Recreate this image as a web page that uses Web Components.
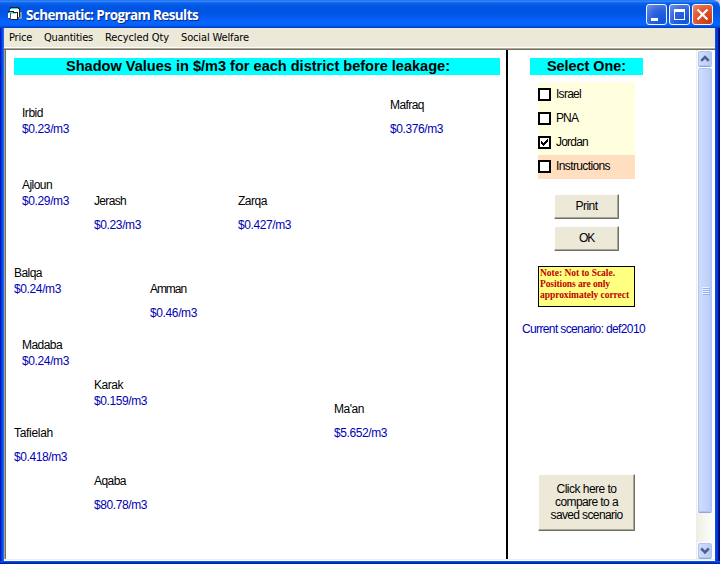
<!DOCTYPE html>
<html lang="en">
<head>
<meta charset="utf-8">
<title>Schematic: Program Results</title>
<style>
html,body{margin:0;width:720px;height:564px;overflow:hidden;background:#c8c8f0;font-family:"Liberation Sans",Arial,sans-serif}
</style>
</head>
<body>
<schematic-window></schematic-window>
<script>
const define = (name, html, after) => customElements.define(name, class extends HTMLElement {
  connectedCallback() {
    if (this.shadowRoot) return;
    this.attachShadow({mode: 'open'}).innerHTML = typeof html === 'function' ? html(this) : html;
    if (after) after(this);
  }
});

// Sets a line of text to an exact width, by tracking or by stretching.
define('fit-text', `<style>
  :host{display:inline-block;white-space:pre;width:var(--w);text-align:left}
  span{display:inline-block;transform-origin:0 50%}
</style><span><slot></slot></span>`, el => {
  const w = +el.getAttribute('w');
  el.style.setProperty('--w', w + 'px');
  const s = el.shadowRoot.querySelector('span');
  const natural = s.getBoundingClientRect().width;
  if (el.hasAttribute('stretch')) s.style.transform = `scaleX(${w / natural})`;
  else s.style.letterSpacing = (w - natural) / el.textContent.length + 'px';
});

define('caption-button', el => {
  const k = el.getAttribute('kind');
  const icon = {
    min: '<path fill="#fff" d="M5 14h7v3H5z"/>',
    max: '<path fill="#fff" fill-rule="evenodd" d="M5 5h11v11H5zM6 8v7h9V8z"/>',
    close: '<path stroke="#fff" stroke-width="2.3" d="M5.5 5.5l10 10M15.5 5.5l-10 10"/>'
  }[k];
  return `<style>
  :host{display:block;box-sizing:border-box;width:21px;height:21px;border:1px solid #f4f6ff;border-radius:3px;
    background:${k === 'close' ? 'radial-gradient(circle at 80% 85%,#c83c12,#e3542e 55%,#ec8a6e)' : 'radial-gradient(circle at 80% 85%,#1053dd,#2c62dc 50%,#6f93ec)'}}
  svg{display:block;margin:-1px}
  </style><svg width="21" height="21">${icon}</svg>`;
});

define('title-bar', el => `<style>
  :host{display:flex;align-items:center;height:28px;box-sizing:border-box;padding:2px 9px 0 8px;border-radius:0 7px 0 0;color:#fff;
   background:linear-gradient(#1663e8 0,#3b8cff 1px,#0a62ea 3px,#0054e3 7px,#0055e5 14px,#0560fa 20px,#0466ff 25px,#0147d8 27px,#0039bd)}
  .t{font:bold 13.5px/20px "Open Sans","Noto Sans",sans-serif;text-shadow:1px 1px #0b2a86;margin:0 auto 0 3px}
  .b{display:flex;gap:2px;margin-right:-2px;padding-bottom:1px}
  .i{margin-top:-3px}
</style>
<svg class="i" width="15" height="14" viewBox="0 0 15 14" shape-rendering="crispEdges">
 <path fill="#8796a6" d="M12 5h2v7h-3z"/>
 <path fill="#222" d="M2 0h9v1h1v9h-1V2H2z"/><path fill="#28d8e0" d="M3 1h7v1H3z"/><path fill="#fff" d="M2 2h9v8H2z"/>
 <path fill="#222" d="M0 4h6v1h4v8H3v-1H1v-1h8V6H5V5H0z"/><path fill="#35d6de" d="M1 5h4v1H1z"/><path fill="#fff" d="M0 6h2v5H0zM3 7h6v5H3z"/><path fill="#8de4ea" d="M3 6h5v1H3z"/><path fill="#555" d="M2 6h1v6H2z"/>
</svg>
<span class="t"><fit-text w="172">${el.getAttribute('caption')}</fit-text></span>
<span class="b"><caption-button kind="min"></caption-button><caption-button kind="max"></caption-button><caption-button kind="close"></caption-button></span>`);

define('menu-bar', `<style>
  :host{display:flex;gap:12px;height:19px;box-sizing:border-box;padding:0 0 0 5px;background:#ece9d8;color:#000;font:11px/20px "DejaVu Sans Condensed","DejaVu Sans",sans-serif}
</style><fit-text w="23">Price</fit-text><fit-text w="49">Quantities</fit-text><fit-text w="64">Recycled Qty</fit-text><fit-text w="68">Social Welfare</fit-text>`);

define('cyan-heading', el => `<style>
  :host{display:flex;justify-content:center;box-sizing:border-box;height:17px;padding-left:2px;background:#0ff;color:#000;font:bold 14px/17px "Liberation Sans",Arial,sans-serif}
</style><fit-text stretch w="${el.getAttribute('w')}">${el.textContent}</fit-text>`);

// A district pinned on the map: name, with its shadow value below.
define('map-district', el => {
  const a = n => el.getAttribute(n);
  return `<style>
  :host{position:absolute;left:${a('x')}px;top:${a('y')}px;display:flex;flex-direction:column;gap:${a('gap') || 2}px;font-size:12px;line-height:14px}
  .v{color:#0000b4}
  </style><fit-text w="${a('nw')}">${a('name')}</fit-text><fit-text class="v" w="${a('vw')}">${a('value')}</fit-text>`;
});

define('district-map', () => {
  const rows = [
    ['Irbid','$0.23/m3',22,106,21,47,2],['Mafraq','$0.376/m3',390,98,34,53,10],['Ajloun','$0.29/m3',22,178,30,47,2],
    ['Jerash','$0.23/m3',94,194,32,47,10],['Zarqa','$0.427/m3',238,194,29,53,10],['Balqa','$0.24/m3',14,266,28,47,2],
    ['Amman','$0.46/m3',150,282,36,47,10],['Madaba','$0.24/m3',22,338,40,47,2],['Karak','$0.159/m3',94,378,29,53,2],
    ["Ma'an",'$5.652/m3',334,402,30,53,10],['Tafielah','$0.418/m3',14,426,39,53,10],['Aqaba','$80.78/m3',94,474,32,53,10]];
  return `<style>:host{display:block;position:relative;box-sizing:border-box;padding:8px 6px 0 8px;border-right:2px solid #000}</style>
  <cyan-heading w="384">Shadow Values in $/m3 for each district before leakage:</cyan-heading>` +
  rows.map(([n,v,x,y,nw,vw,g]) => `<map-district name="${n}" value="${v}" x="${x-6}" y="${y-50}" nw="${nw}" vw="${vw}" gap="${g}"></map-district>`).join('');
});

define('check-option', el => `<style>
  :host{display:flex;align-items:center;gap:5px;height:24px;font-size:12px;line-height:14px}
  i{box-sizing:border-box;width:13px;height:13px;border:2px solid #000;background:#fff}
  svg{display:block} fit-text{margin-top:-1px}
</style><i>${el.hasAttribute('checked') ? '<svg width="9" height="9" shape-rendering="crispEdges"><path d="M1 3h1v1h1v1h1V4h1V3h1V2h1V1h1v3H7v1H6v1H5v1H4v1H3V7H2V6H1z"/></svg>' : ''}</i><fit-text w="${el.getAttribute('w')}">${el.textContent}</fit-text>`);

define('push-button', `<style>
  :host{display:flex;flex-direction:column;align-items:center;justify-content:center;box-sizing:border-box;background:#ece9d8;font-size:12px;line-height:13px;
    border:1px solid;border-color:#fffffa #716f64 #716f64 #fffffa;box-shadow:inset -1px -1px #aca899}
</style><slot></slot>`);

define('side-panel', `<style>
  :host{display:flex;flex-direction:column;align-items:flex-start;box-sizing:border-box;padding:8px 0 0 14px;background:#fff}
  cyan-heading{width:113px;margin-left:8px;padding-left:0}
  .opts{box-sizing:border-box;width:97px;height:97px;margin:7px 0 0 16px;background:linear-gradient(#ffffe0 73px,#ffdfc0 73px)}
  .small{width:65px;height:25px;margin-left:32px}
  .note{box-sizing:border-box;width:97px;height:41px;margin:15px 0 0 16px;padding:1px 0 0 1px;border:1px solid #000;background:#ffff80;color:#c00000;
    display:flex;flex-direction:column;font:bold 9.5px/11px "Liberation Serif",serif}
  .cur{margin-top:15px;color:#0000b4;font-size:12px;line-height:14px}
  .big{width:97px;height:57px;margin:138px 0 0 16px}
</style>
<cyan-heading w="79">Select One:</cyan-heading>
<div class="opts"><check-option w="25">Israel</check-option><check-option w="22">PNA</check-option><check-option w="32" checked>Jordan</check-option><check-option w="54">Instructions</check-option></div>
<push-button class="small" style="margin-top:15px"><fit-text w="22">Print</fit-text></push-button>
<push-button class="small" style="margin-top:7px"><fit-text w="15">OK</fit-text></push-button>
<div class="note"><fit-text w="75">Note: Not to Scale.</fit-text><fit-text w="70">Positions are only</fit-text><fit-text w="89">approximately correct</fit-text></div>
<fit-text class="cur" w="123">Current scenario: def2010</fit-text>
<push-button class="big"><fit-text w="60">Click here to</fit-text><fit-text w="63">compare to a</fit-text><fit-text w="72">saved scenario</fit-text></push-button>`);

define('scroll-bar', () => {
  const arrow = d => `<svg width="14" height="15"><path d="${d}" fill="none" stroke="#4d6185" stroke-width="2.6"/></svg>`;
  return `<style>
  :host{display:flex;flex-direction:column;align-items:center;box-sizing:border-box;width:17px;padding:1px 0 1px 1px;background:linear-gradient(90deg,#eeede5,#fefefb)}
  .b,.th{box-sizing:border-box;width:14px;border:1px solid #b0c4f0;border-radius:2px;background:linear-gradient(90deg,#cddcff,#c3d3fd 60%,#b7caf5);box-shadow:0 1px #8ca9dc,0 0 0 1px #fff}
  .b{height:15px}.b svg{display:block;margin:-1px}
  .th{height:444px;margin:2px 0 auto;display:flex;flex-direction:column;align-items:center;justify-content:center;gap:1px}
  .th i{width:7px;height:1px;background:#eef4fe;box-shadow:1px 1px #8cb0f8}
  </style><div class="b">${arrow('M3.2 9.8L7 6l3.8 3.8')}</div><div class="th"><i></i><i></i><i></i><i></i></div><div class="b">${arrow('M3.2 5.5L7 9.3l3.8-3.8')}</div>`;
});

define('schematic-window', `<style>
  :host{display:flex;flex-direction:column;width:720px;height:564px}
  .frame{flex:1;display:flex;flex-direction:column;padding:0 5px 3px 4px;
   background:linear-gradient(transparent 533px,#0b51ea 533px 534px,#0038d8 534px 535px,#001ea0 535px),linear-gradient(90deg,#0018c8 0 1px,#0838dc 1px 2px,#0a4ee6 2px 3px,#166aee 3px 4px,transparent 4px 715px,#0a4ee6 715px 716px,#0838dc 716px 718px,#001490 718px 719px,#000c68 719px)}
  .client{flex:1;display:grid;grid-template-columns:502px 188px 17px;box-sizing:border-box;background:#fff;border-left:1px solid #aca899;box-shadow:inset 1px 0 #716f64;padding:0 2px 0 1px}
  .edge{height:3px;background:linear-gradient(#fff 0 1px,#aca899 1px 2px,#716f64 2px)}
  .foot{height:2px;background:linear-gradient(#f1efe2 0 1px,#fff 1px)}
</style>
<title-bar caption="Schematic: Program Results"></title-bar>
<div class="frame"><menu-bar></menu-bar><div class="edge"></div>
<div class="client"><district-map></district-map><side-panel></side-panel><scroll-bar></scroll-bar></div><div class="foot"></div></div>`);
</script>
</body>
</html>
